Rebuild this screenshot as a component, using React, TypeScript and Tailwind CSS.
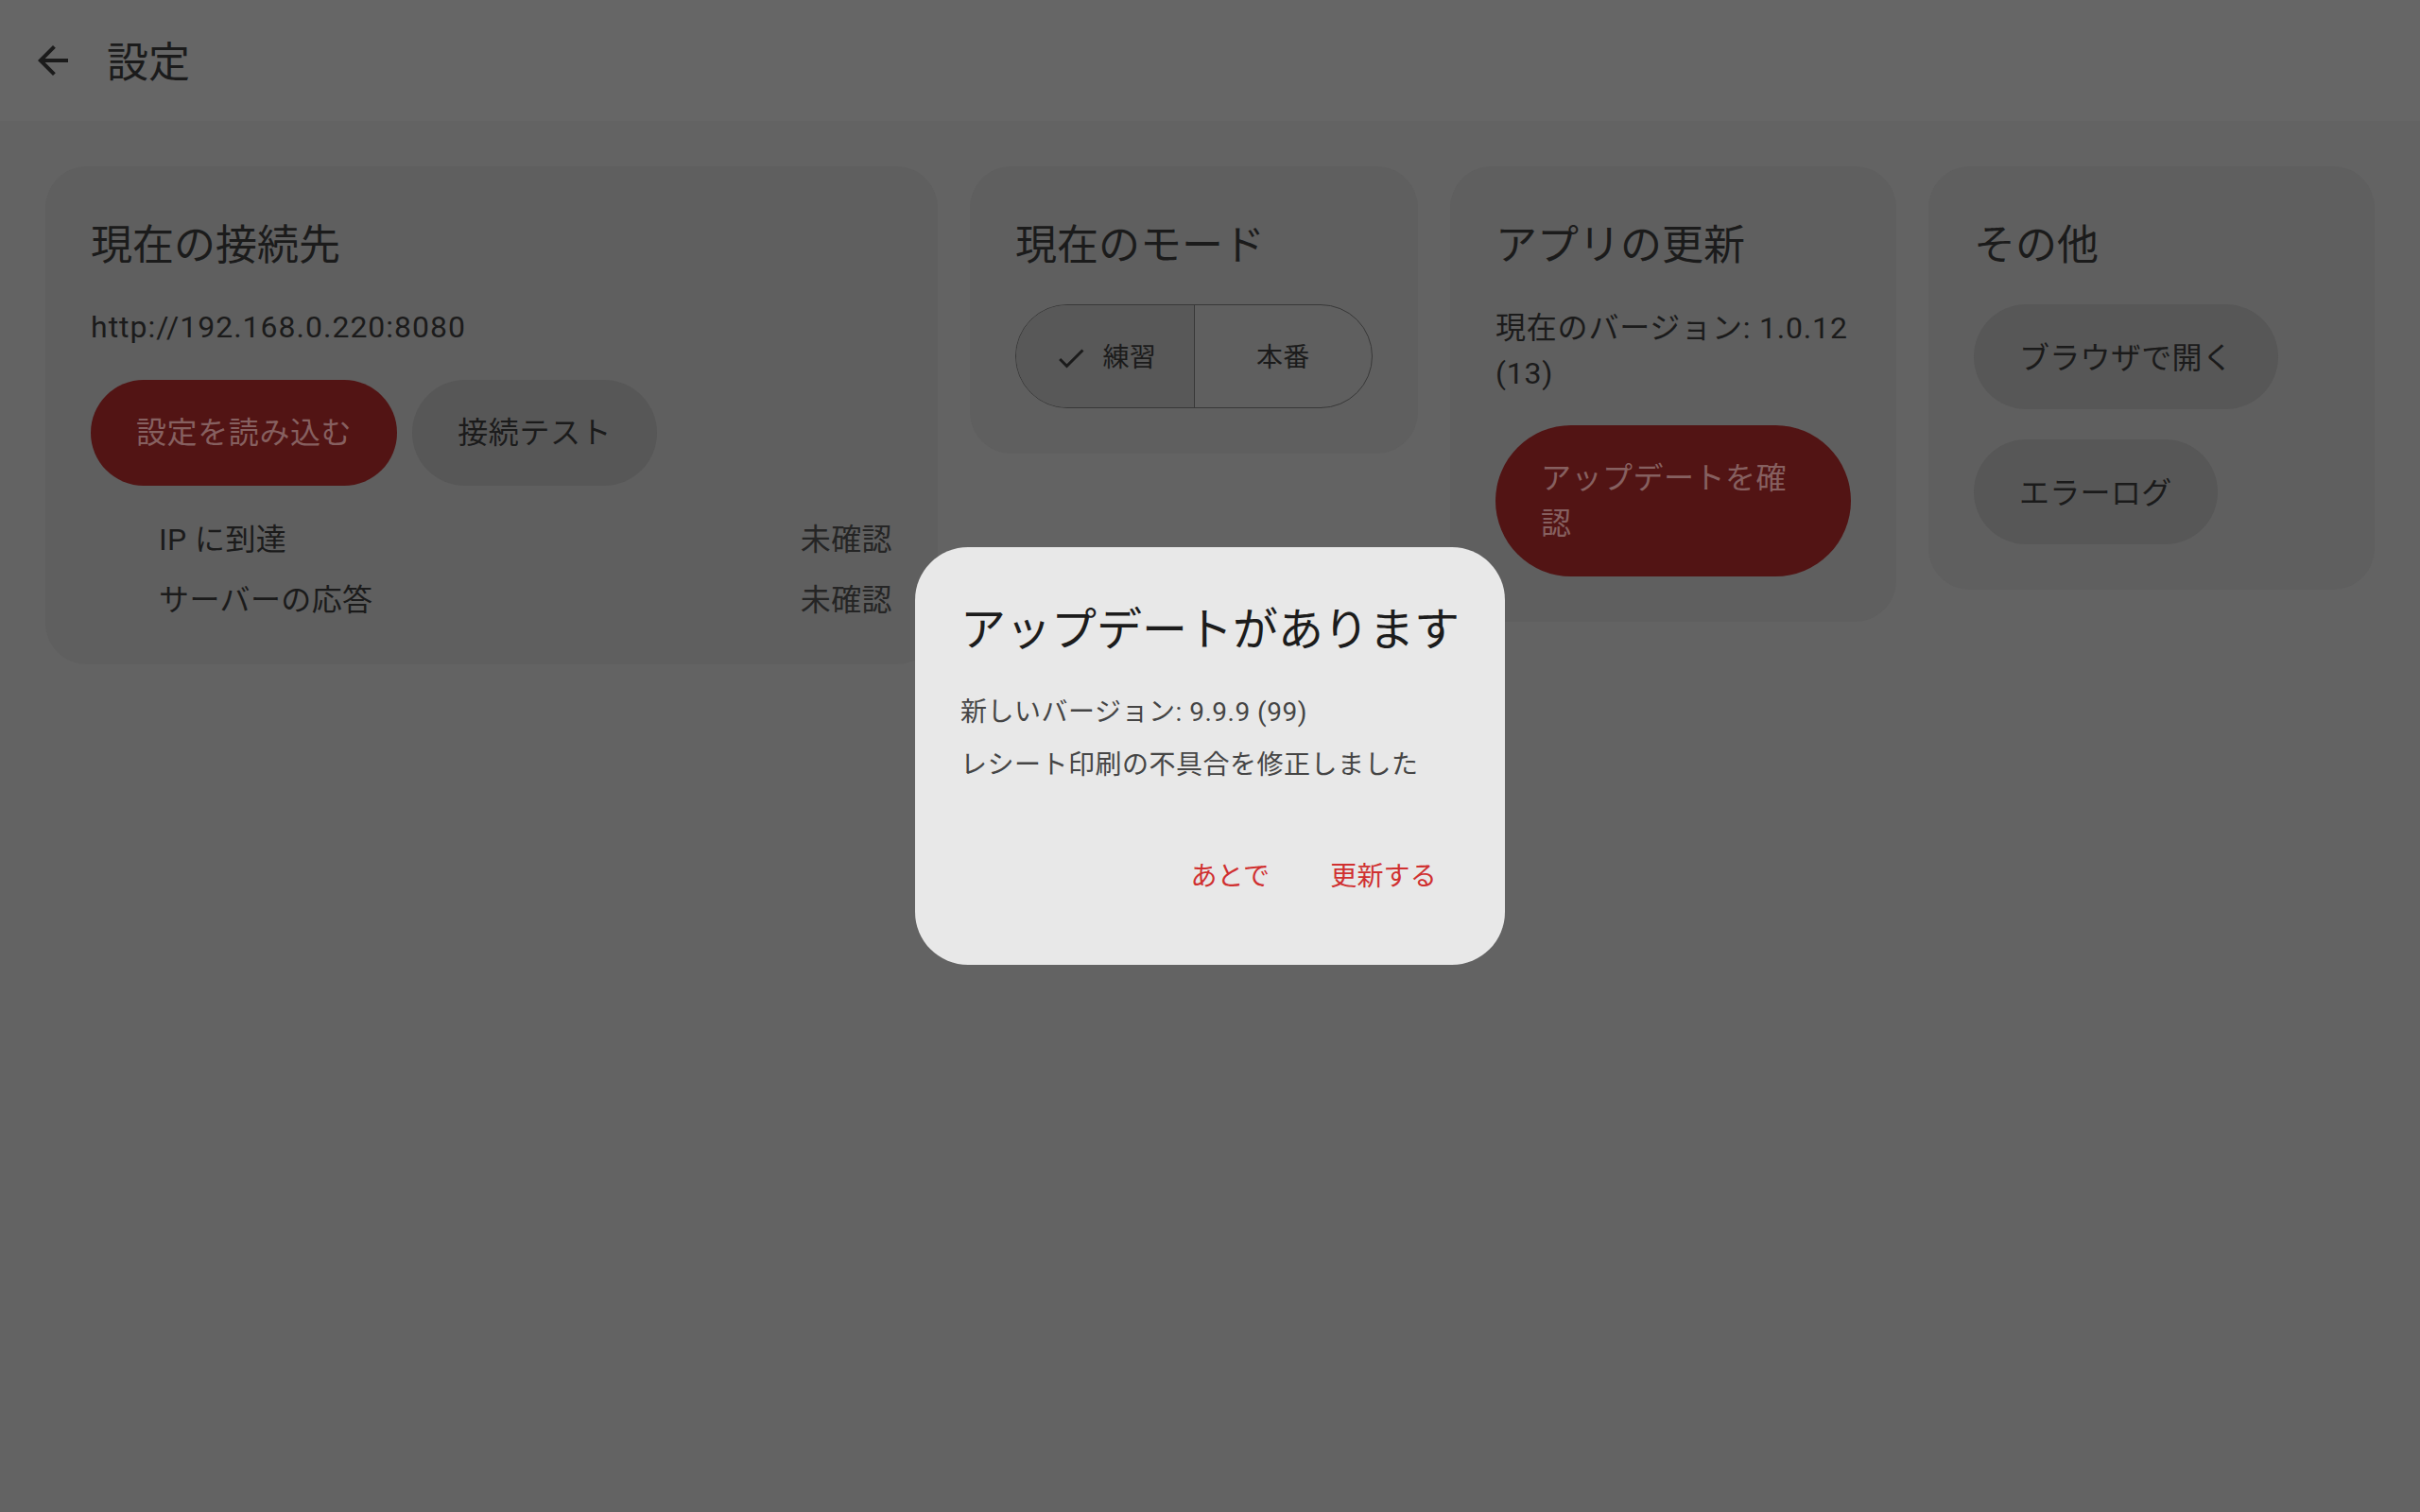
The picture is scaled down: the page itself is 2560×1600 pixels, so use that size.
import React from "react";

// Settings screen with the "update available" dialog open over it.
// Colours below are already the dimmed (scrimmed) values.

function BackArrow() {
  return (
    <svg viewBox="0 0 24 24" className="h-12 w-12 fill-[#1b1b1b]" aria-hidden>
      <path d="M20 11H7.83l5.59-5.59L12 4l-8 8 8 8 1.41-1.41L7.83 13H20v-2z" />
    </svg>
  );
}

function Check() {
  return (
    <svg viewBox="0 0 24 24" className="h-9 w-9 fill-[#1b1b1b]" aria-hidden>
      <path d="M9 16.17 4.83 12l-1.42 1.41L9 19 21 7l-1.41-1.41L9 16.17z" />
    </svg>
  );
}

function Card({ title, className = "pb-12", children }: { title: string; className?: string; children: React.ReactNode }) {
  return (
    <section className={`rounded-[44px] bg-[#5f5f5f] px-12 pt-[54px] ${className}`}>
      <h2 className="mb-9 translate-y-[2px] text-[44px] leading-[56px] text-[#1b1b1b]">{title}</h2>
      {children}
    </section>
  );
}

const statusRows = [
  { label: "IP に到達", value: "未確認" },
  { label: "サーバーの応答", value: "未確認" },
];

export default function App() {
  return (
    <div className="relative min-h-screen w-full bg-[#636363] font-[Roboto,'Noto_Sans_CJK_JP',sans-serif] text-[#1b1b1b]">
      {/* App bar */}
      <header className="flex h-[128px] items-center bg-[#666666] pl-8">
        <BackArrow />
        <h1 className="ml-[33px] mt-[5px] text-[44px] leading-[56px]">設定</h1>
      </header>

      {/* Cards */}
      <main className="grid grid-cols-[2fr_1fr_1fr_1fr] items-start gap-[34px] px-12 pt-12">
        <Card title="現在の接続先" className="pb-[36px]">
          <p className="text-[32px] leading-[48px] tracking-[1px]">http://192.168.0.220:8080</p>
          <div className="mt-8 flex gap-4">
            <button className="h-[112px] rounded-full bg-[#521414] px-12 text-[32px] tracking-[0.6px] text-[#866060]">
              設定を読み込む
            </button>
            <button className="h-[112px] rounded-full bg-[#575757] px-12 text-[32px] tracking-[0.6px] text-[#1b1b1b]">
              接続テスト
            </button>
          </div>
          <ul className="mt-[25px]">
            {statusRows.map((r) => (
              <li key={r.label} className="flex h-16 items-center justify-between pl-[72px] text-[32px] tracking-[0.4px]">
                <span>{r.label}</span>
                <span className="text-[#252525]">{r.value}</span>
              </li>
            ))}
          </ul>
        </Card>

        <Card title="現在のモード">
          <div className="flex h-[110px] w-[378px] overflow-hidden rounded-full border-[1.5px] border-[#383838] text-[28px] tracking-[0.2px]">
            <div className="flex flex-1 items-center justify-center gap-4 border-r-[1.5px] border-[#383838] bg-[#585858] pt-1">
              <Check />
              <span>練習</span>
            </div>
            <div className="flex flex-1 items-center justify-center pt-1">
              <span>本番</span>
            </div>
          </div>
        </Card>

        <Card title="アプリの更新">
          <div className="translate-y-[1px]">
            <p className="text-[32px] leading-[48px] tracking-[0.8px]">現在のバージョン: 1.0.12</p>
            <p className="text-[32px] leading-[48px] tracking-[0.8px]">(13)</p>
          </div>
          <button className="mt-8 w-full rounded-full bg-[#521414] px-12 py-8 text-left text-[32px] leading-[48px] tracking-[0.5px] text-[#866060]">
            アップデートを確認
          </button>
        </Card>

        <Card title="その他">
          <div className="flex flex-col items-start gap-8">
            <button className="h-[111px] rounded-full bg-[#575757] px-12 pt-[3px] text-[32px] tracking-[0.3px]">ブラウザで開く</button>
            <button className="h-[111px] rounded-full bg-[#575757] px-12 pt-[3px] text-[32px] tracking-[0.3px]">エラーログ</button>
          </div>
        </Card>
      </main>

      {/* Modal dialog */}
      <div className="fixed inset-0 flex items-center justify-center">
        <div className="w-[624px] rounded-[56px] bg-[#e8e8e8] px-12 pt-[56px] pb-[53px]">
          <h3 className="whitespace-nowrap text-[48px] leading-[64px] text-[#1c1c1c]">アップデートがあります</h3>
          <p className="mt-[35px] text-[28px] leading-[40px] tracking-[0.5px] text-[#454545]">新しいバージョン: 9.9.9 (99)</p>
          <p className="mt-4 text-[28px] leading-[40px] tracking-[0.5px] text-[#454545]">レシート印刷の不具合を修正しました</p>
          <div className="mt-[58px] flex justify-end gap-4">
            <button className="h-20 rounded-full px-6 text-[28px] tracking-[0.2px] text-[#d03030]">あとで</button>
            <button className="h-20 rounded-full px-6 text-[28px] tracking-[0.2px] text-[#d03030]">更新する</button>
          </div>
        </div>
      </div>
    </div>
  );
}
